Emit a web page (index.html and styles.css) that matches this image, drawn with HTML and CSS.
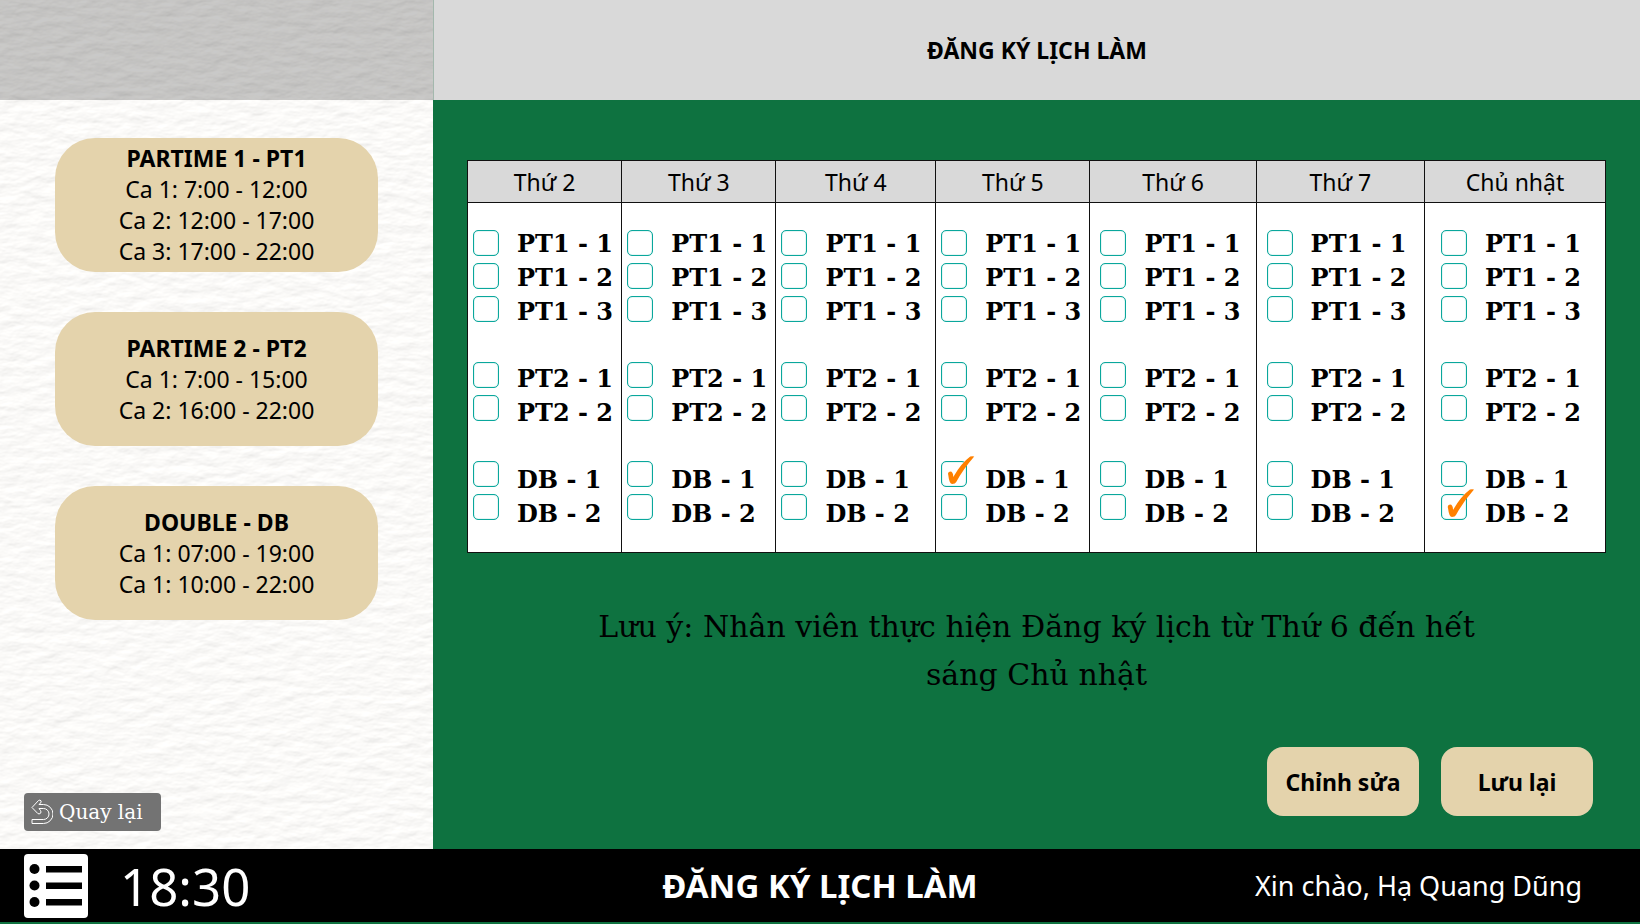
FILE: index.html
```html
<!DOCTYPE html>
<html lang="vi">
<head>
<meta charset="utf-8">
<title>Đăng ký lịch làm</title>
<link rel="stylesheet" href="styles.css">
</head>
<body>
<div class="app">
  <aside class="sidebar">
    <svg class="paper" aria-hidden="true">
      <filter id="grain" x="0" y="0" width="100%" height="100%">
        <feTurbulence type="fractalNoise" baseFrequency="0.045 0.1" numOctaves="4" seed="8" result="noise"/>
        <feDiffuseLighting in="noise" lighting-color="#fdfcfa" surfaceScale="0.7" diffuseConstant="1.13">
          <feDistantLight azimuth="250" elevation="60"/>
        </feDiffuseLighting>
      </filter>
      <rect width="100%" height="100%" filter="url(#grain)"/>
    </svg>
    <div class="sidebar-top"></div>
    <div class="shifts">
      <section class="shift">
        <h2>PARTIME 1 - PT1</h2>
        <p>Ca 1: 7:00 - 12:00</p>
        <p>Ca 2: 12:00 - 17:00</p>
        <p>Ca 3: 17:00 - 22:00</p>
      </section>
      <section class="shift">
        <h2>PARTIME 2 - PT2</h2>
        <p>Ca 1: 7:00 - 15:00</p>
        <p>Ca 2: 16:00 - 22:00</p>
      </section>
      <section class="shift">
        <h2>DOUBLE - DB</h2>
        <p>Ca 1: 07:00 - 19:00</p>
        <p>Ca 1: 10:00 - 22:00</p>
      </section>
    </div>
    <button class="back" type="button">
      <svg width="22" height="26" viewBox="0 0 22 26" fill="none" stroke="#fff" stroke-width="1" stroke-linejoin="round" aria-hidden="true">
        <path d="M1 8.500L7.500 1.500Q9 .5 10 1.800Q10.500 3 9.500 4L8 5.500H12.500A9.500 9.500 0 0 1 12.500 24.500H1V20.500H12.500A5.500 5.500 0 0 0 12.500 9.500H8L9.500 11.500Q10.500 13 9.500 14.300Q8 15.500 6.800 14.500Z"/>
      </svg>
      <span>Quay lại</span>
    </button>
  </aside>

  <main class="main">
    <header class="topbar"><h1>ĐĂNG KÝ LỊCH LÀM</h1></header>
    <div class="content">
      <table class="schedule">
        <colgroup>
          <col class="c-mon"><col class="c-tue"><col class="c-wed"><col class="c-thu"><col class="c-fri"><col class="c-sat"><col class="c-sun">
        </colgroup>
        <thead>
          <tr><th>Thứ 2</th><th>Thứ 3</th><th>Thứ 4</th><th>Thứ 5</th><th>Thứ 6</th><th>Thứ 7</th><th>Chủ nhật</th></tr>
        </thead>
        <tbody>
          <tr>
            <td><div class="day">
              <div class="boxes">
                <div><input type="checkbox" id="a1"><input type="checkbox" id="a2"><input type="checkbox" id="a3"></div>
                <div><input type="checkbox" id="a4"><input type="checkbox" id="a5"></div>
                <div><input type="checkbox" id="a6"><input type="checkbox" id="a7"></div>
              </div>
              <div class="names">
                <div><label for="a1">PT1 - 1</label><label for="a2">PT1 - 2</label><label for="a3">PT1 - 3</label></div>
                <div><label for="a4">PT2 - 1</label><label for="a5">PT2 - 2</label></div>
                <div><label for="a6">DB - 1</label><label for="a7">DB - 2</label></div>
              </div>
            </div></td>
            <td><div class="day">
              <div class="boxes">
                <div><input type="checkbox" id="b1"><input type="checkbox" id="b2"><input type="checkbox" id="b3"></div>
                <div><input type="checkbox" id="b4"><input type="checkbox" id="b5"></div>
                <div><input type="checkbox" id="b6"><input type="checkbox" id="b7"></div>
              </div>
              <div class="names">
                <div><label for="b1">PT1 - 1</label><label for="b2">PT1 - 2</label><label for="b3">PT1 - 3</label></div>
                <div><label for="b4">PT2 - 1</label><label for="b5">PT2 - 2</label></div>
                <div><label for="b6">DB - 1</label><label for="b7">DB - 2</label></div>
              </div>
            </div></td>
            <td><div class="day">
              <div class="boxes">
                <div><input type="checkbox" id="c1"><input type="checkbox" id="c2"><input type="checkbox" id="c3"></div>
                <div><input type="checkbox" id="c4"><input type="checkbox" id="c5"></div>
                <div><input type="checkbox" id="c6"><input type="checkbox" id="c7"></div>
              </div>
              <div class="names">
                <div><label for="c1">PT1 - 1</label><label for="c2">PT1 - 2</label><label for="c3">PT1 - 3</label></div>
                <div><label for="c4">PT2 - 1</label><label for="c5">PT2 - 2</label></div>
                <div><label for="c6">DB - 1</label><label for="c7">DB - 2</label></div>
              </div>
            </div></td>
            <td><div class="day">
              <div class="boxes">
                <div><input type="checkbox" id="d1"><input type="checkbox" id="d2"><input type="checkbox" id="d3"></div>
                <div><input type="checkbox" id="d4"><input type="checkbox" id="d5"></div>
                <div><input type="checkbox" id="d6" checked><input type="checkbox" id="d7"></div>
              </div>
              <div class="names">
                <div><label for="d1">PT1 - 1</label><label for="d2">PT1 - 2</label><label for="d3">PT1 - 3</label></div>
                <div><label for="d4">PT2 - 1</label><label for="d5">PT2 - 2</label></div>
                <div><label for="d6">DB - 1</label><label for="d7">DB - 2</label></div>
              </div>
            </div></td>
            <td><div class="day day-roomy">
              <div class="boxes">
                <div><input type="checkbox" id="e1"><input type="checkbox" id="e2"><input type="checkbox" id="e3"></div>
                <div><input type="checkbox" id="e4"><input type="checkbox" id="e5"></div>
                <div><input type="checkbox" id="e6"><input type="checkbox" id="e7"></div>
              </div>
              <div class="names">
                <div><label for="e1">PT1 - 1</label><label for="e2">PT1 - 2</label><label for="e3">PT1 - 3</label></div>
                <div><label for="e4">PT2 - 1</label><label for="e5">PT2 - 2</label></div>
                <div><label for="e6">DB - 1</label><label for="e7">DB - 2</label></div>
              </div>
            </div></td>
            <td><div class="day day-roomy">
              <div class="boxes">
                <div><input type="checkbox" id="f1"><input type="checkbox" id="f2"><input type="checkbox" id="f3"></div>
                <div><input type="checkbox" id="f4"><input type="checkbox" id="f5"></div>
                <div><input type="checkbox" id="f6"><input type="checkbox" id="f7"></div>
              </div>
              <div class="names">
                <div><label for="f1">PT1 - 1</label><label for="f2">PT1 - 2</label><label for="f3">PT1 - 3</label></div>
                <div><label for="f4">PT2 - 1</label><label for="f5">PT2 - 2</label></div>
                <div><label for="f6">DB - 1</label><label for="f7">DB - 2</label></div>
              </div>
            </div></td>
            <td><div class="day day-wide">
              <div class="boxes">
                <div><input type="checkbox" id="g1"><input type="checkbox" id="g2"><input type="checkbox" id="g3"></div>
                <div><input type="checkbox" id="g4"><input type="checkbox" id="g5"></div>
                <div><input type="checkbox" id="g6"><input type="checkbox" id="g7" checked></div>
              </div>
              <div class="names">
                <div><label for="g1">PT1 - 1</label><label for="g2">PT1 - 2</label><label for="g3">PT1 - 3</label></div>
                <div><label for="g4">PT2 - 1</label><label for="g5">PT2 - 2</label></div>
                <div><label for="g6">DB - 1</label><label for="g7">DB - 2</label></div>
              </div>
            </div></td>
          </tr>
        </tbody>
      </table>
      <p class="note">Lưu ý: Nhân viên thực hiện Đăng ký lịch từ Thứ 6 đến hết sáng Chủ nhật</p>
      <div class="actions">
        <button type="button">Chỉnh sửa</button>
        <button type="button">Lưu lại</button>
      </div>
    </div>
  </main>

  <footer class="statusbar">
    <div class="status-left">
      <button class="menu" type="button" aria-label="Menu">
        <svg width="64" height="64" viewBox="0 0 64 64" aria-hidden="true">
          <rect width="64" height="64" rx="4" fill="#fff"/>
          <circle cx="10.500" cy="15" r="5"/><circle cx="10.500" cy="31.500" r="5"/><circle cx="10.500" cy="48" r="5"/>
          <path d="M22 12h36v6.500H22zM22 28.500h36v6.500H22zM22 45h36v6.500H22z"/>
        </svg>
      </button>
      <time>18:30</time>
    </div>
    <strong>ĐĂNG KÝ LỊCH LÀM</strong>
    <span class="greeting">Xin chào, Hạ Quang Dũng</span>
  </footer>
</div>
</body>
</html>
```
FILE: styles.css
```css
* {
  box-sizing: border-box;
}

body {
  margin: 0;
  background: #0e7240;
  color: #000;
  font-family: "Noto Sans", sans-serif;
}

h1, h2, p {
  margin: 0;
}

button {
  border: 0;
  font: inherit;
  cursor: pointer;
}

.app {
  display: grid;
  grid-template-columns: 433px 1fr;
  grid-template-rows: 1fr auto;
  min-height: 100vh;
  padding-bottom: 2px;
}

/* Sidebar */
.sidebar {
  position: relative;
  display: flex;
  flex-direction: column;
  background: #f8f8f7;
  isolation: isolate;
}

.paper {
  position: absolute;
  inset: 0;
  width: 100%;
  height: 100%;
  z-index: -1;
}

.sidebar-top {
  height: 100px;
  background: rgba(0, 0, 0, 0.21);
}

.shifts {
  display: flex;
  flex-direction: column;
  gap: 40px;
  padding: 38px 55px 0;
}

.shift {
  display: flex;
  flex-direction: column;
  justify-content: center;
  height: 134px;
  border-radius: 40px;
  background: #e4d3ac;
  font-size: 23px;
  line-height: 31px;
  text-align: center;
}

.shift h2 {
  font-size: 23px;
}

.back {
  display: flex;
  align-items: center;
  gap: 6px;
  width: 137px;
  height: 38px;
  margin: auto 0 18px 24px;
  padding: 0 7px;
  border-radius: 4px;
  background: #737373;
  color: #fff;
  font-family: "DejaVu Serif", serif;
  font-size: 20px;
}

/* Main */
.main {
  display: flex;
  flex-direction: column;
}

.topbar {
  display: flex;
  align-items: center;
  justify-content: center;
  height: 100px;
  border-left: 1px solid #a3b8ad;
  background: #d9d9d9;
}

.topbar h1 {
  font-size: 23px;
  line-height: 32px;
}

.content {
  flex: 1;
  display: flex;
  flex-direction: column;
  padding: 60px 34px 33px;
}

.schedule {
  width: 100%;
  border-collapse: collapse;
  table-layout: fixed;
  background: #fff;
}

.c-mon, .c-tue, .c-thu { width: 13.55%; }
.c-wed { width: 14.05%; }
.c-fri { width: 14.6%; }
.c-sat { width: 14.8%; }
.c-sun { width: 15.9%; }

.schedule th,
.schedule td {
  padding: 0;
  border: 1px solid #111;
}

.schedule th {
  height: 42px;
  background: #d9d9d9;
  font-size: 23px;
  font-weight: 400;
  line-height: 32px;
}

.day {
  display: flex;
  gap: 18px;
  height: 349px;
  padding: 24px 0 0 5px;
}

.day-roomy { padding-left: 10px; }
.day-wide { padding-left: 16px; }

.boxes,
.names,
.boxes div,
.names div {
  display: flex;
  flex-direction: column;
}

.boxes {
  gap: 40px;
  padding-top: 3px;
}

.boxes div {
  gap: 7px;
}

.names {
  gap: 33px;
}

.names label {
  font: bold 24px/34px "DejaVu Serif", serif;
  white-space: nowrap;
}

input[type="checkbox"] {
  position: relative;
  appearance: none;
  width: 26px;
  height: 26px;
  margin: 0;
  border: 1px solid #0aa79c;
  border-radius: 5px;
  background: #fff;
  box-shadow: inset 0 0 1px #0aa79c;
}

input[type="checkbox"]:checked::after {
  content: "";
  position: absolute;
  left: 4px;
  bottom: 1px;
  width: 30px;
  height: 30px;
  background: #ff8000;
  clip-path: path("M2 20Q1 17 4 16.500Q7 16.500 7 22Q15 8 24 1.500Q26 1 28 1.500Q17 14 10 27Q9 29 6 29Q3 29 2 20Z");
}

.note {
  max-width: 920px;
  margin: 50px auto 0;
  font-family: "DejaVu Serif", serif;
  font-size: 30px;
  line-height: 48px;
  text-align: center;
}

.actions {
  display: flex;
  justify-content: flex-end;
  gap: 22px;
  margin-top: auto;
  padding-right: 13px;
}

.actions button {
  width: 152px;
  height: 69px;
  border-radius: 16px;
  background: #e4d3ac;
  color: #000;
  font-size: 23px;
  font-weight: 700;
}

/* Status bar */
.statusbar {
  grid-column: 1 / -1;
  display: grid;
  grid-template-columns: 1fr auto 1fr;
  align-items: center;
  height: 73px;
  padding: 0 24px;
  background: #000;
  color: #fff;
}

.status-left {
  display: flex;
  align-items: center;
  gap: 32px;
}

.menu {
  display: flex;
  padding: 0;
  background: none;
}

.statusbar time {
  font-size: 51px;
  line-height: 64px;
}

.statusbar strong {
  font-size: 33px;
  line-height: 48px;
}

.greeting {
  padding-right: 34px;
  font-size: 27px;
  text-align: right;
}
```
